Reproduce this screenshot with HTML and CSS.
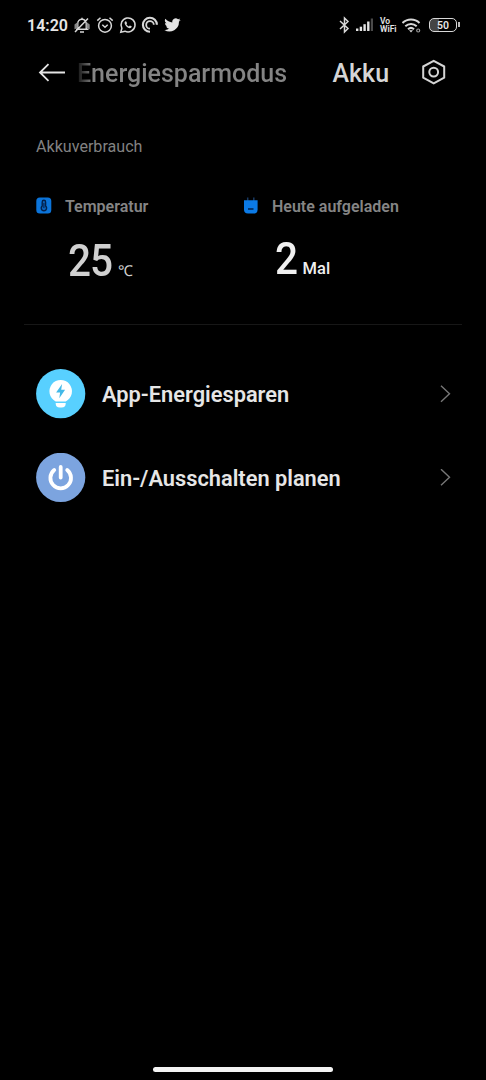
FILE: index.html
```html
<!DOCTYPE html>
<html lang="de">
<head>
<meta charset="utf-8">
<meta name="viewport" content="width=device-width, initial-scale=1">
<title>Akku</title>
<link rel="stylesheet" href="styles.css">
</head>
<body>
<div class="screen">
  <div class="statusbar">
    <span class="time">14:20</span>
    <div class="status-left">
      <svg width="18" height="18" viewBox="0 0 18 18" fill="none" stroke="#d8d8d8" stroke-width="1.500">
        <path d="M4.700 12.500V7.500a4.300 4.300 0 0 1 8.600 0v5M9 3.200V1.800M3 13.300h12.500M7 16h4M2 16L15 2.500"/>
        <path d="M1.500 8.500L4.700 6v6l-3.200 1.200zM16.700 8.500L13.500 6v6l3.200 1.200z" fill="#888" stroke="none"/>
      </svg>
      <svg width="18" height="18" viewBox="0 0 18 18" fill="none" stroke="#d8d8d8" stroke-width="1.500">
        <circle cx="9" cy="9.800" r="6.400"/>
        <path d="M6.300 8.800L9 11.300l2.700-2.500M1.300 4.600l3.200-2.800M16.700 4.600l-3.200-2.800"/>
      </svg>
      <svg width="18" height="18" viewBox="0 0 18 18">
        <path d="M1.800 16.300l1.100-4A7 7 0 1 1 5.900 15.200z" fill="none" stroke="#d8d8d8" stroke-width="1.500"/>
        <path d="M6.400 5.200c-1.200.8-1 2.500.3 4.200 1.500 2 3.500 3.200 5 2.600.9-.4 1.200-1.300.9-1.700l-1.700-.9-1.100 1c-1.100-.4-1.900-1.200-2.400-2.200l.7-1-.8-1.800z" fill="#d8d8d8"/>
      </svg>
      <svg width="18" height="18" viewBox="0 0 18 18" fill="none" stroke="#d8d8d8">
        <path d="M9 15.800A7 7 0 1 1 15.900 8.800" stroke-width="2.100"/>
        <path d="M9 12.700a3.800 3.800 0 1 1 3.800-3.900" stroke-width="1.800"/>
      </svg>
      <svg width="17" height="18" viewBox="0 0 24 24" fill="#e4e4e4">
        <path d="M23.500 4.800c-.9.400-1.800.6-2.700.7 1-.6 1.700-1.500 2-2.600-.9.500-1.900.9-3 1.100a4.700 4.700 0 0 0-8 4.300C7.900 8.100 4.400 6.200 2 3.300a4.700 4.700 0 0 0 1.500 6.300c-.8 0-1.500-.2-2.100-.6 0 2.300 1.600 4.200 3.800 4.700-.7.200-1.400.2-2.100.1.600 1.900 2.300 3.200 4.400 3.300A9.500 9.500 0 0 1 .5 19a13.400 13.400 0 0 0 20.600-11.900c.9-.6 1.700-1.400 2.400-2.300z"/>
      </svg>
    </div>
    <div class="status-right">
      <svg width="12" height="18" viewBox="0 0 12 18" fill="none" stroke="#d8d8d8" stroke-width="1.500">
        <path d="M2 5l8 7.500L6.500 16V2L10 5.500 2 13"/>
      </svg>
      <svg width="18" height="14" viewBox="0 0 18 14" fill="#e4e4e4">
        <rect x="0" y="10.500" width="2.400" height="2.500"/>
        <rect x="3.700" y="8.700" width="2.400" height="4.300"/>
        <rect x="7.400" y="6.200" width="2.400" height="6.800"/>
        <rect x="11.100" y="3.500" width="2.400" height="9.500"/>
        <rect x="14.800" y="0.500" width="2.200" height="12.500" fill="#4a4a4a"/>
      </svg>
      <div class="vowifi"><span>Vo</span><span>WiFi</span></div>
      <svg width="20" height="18" viewBox="0 0 20 18" fill="none" stroke="#d8d8d8" stroke-width="2">
        <path d="M0.500 7a12.200 12.200 0 0 1 17 0M3.300 10.200a8.300 8.300 0 0 1 11.400 0M6 13.200a4.500 4.500 0 0 1 6 0"/>
        <path d="M7 14.200L9 16.400l2-2.200z" fill="#d8d8d8" stroke="none"/>
        <circle cx="16.200" cy="14.500" r="1.500" stroke="#999" stroke-width="1.200"/>
      </svg>
      <div class="battery"><span>50</span></div>
    </div>
  </div>

  <div class="header">
    <svg class="back" width="28" height="20" viewBox="0 0 28 20" fill="none" stroke="#e4e4e4" stroke-width="1.800">
      <path d="M27 9.500H2M10.500 1.200L2 9.500l8.500 8.300"/>
    </svg>
    <div class="tabs">
      <span class="tab">Energiesparmodus</span>
      <span class="tab active">Akku</span>
    </div>
    <svg class="settings" width="26" height="28" viewBox="0 0 26 28" fill="none" stroke="#d4d4d4" stroke-width="2">
      <path d="M12.700 1.800L23.200 7.500v11.200L12.700 24.400 2.200 18.700V7.500z" stroke-linejoin="round"/>
      <circle cx="12.700" cy="13.100" r="4.400"/>
    </svg>
  </div>

  <div class="usage">
    <div class="section-title">Akkuverbrauch</div>
    <div class="stats">
      <div class="stat">
        <div class="stat-head">
          <svg width="16" height="18" viewBox="0 0 16 18">
            <rect x="0.300" y="0.500" width="15" height="16" rx="3.500" fill="#0b74da"/>
            <path d="M6.200 9V5a1.700 1.700 0 0 1 3.400 0v4a2.700 2.700 0 1 1-3.400 0z" fill="#0b60b8" stroke="#03204a" stroke-width="1.400"/>
            <path d="M7.900 6v5" stroke="#03204a" stroke-width="1"/>
          </svg>
          <span>Temperatur</span>
        </div>
        <div class="value temp"><b>25</b><span>℃</span></div>
      </div>
      <div class="stat">
        <div class="stat-head">
          <svg width="16" height="18" viewBox="0 0 16 18">
            <path d="M4.700 0.500v4M10.800 0.500v4" stroke="#173963" stroke-width="1.500"/>
            <path d="M1 3.300h13.600v9.200a4 4 0 0 1-4 4H5a4 4 0 0 1-4-4z" fill="#0b7ae6"/>
            <path d="M5 12h5.500" stroke="#03204a" stroke-width="1.500"/>
          </svg>
          <span>Heute aufgeladen</span>
        </div>
        <div class="value charge"><b>2</b><span>Mal</span></div>
      </div>
    </div>
  </div>

  <div class="list">
    <div class="item">
      <svg width="50" height="50" viewBox="0 0 50 50">
        <circle cx="24.700" cy="24.700" r="24.600" fill="#58d0ff"/>
        <path d="M19.700 32.400a11.300 11.300 0 1 1 10 0z" fill="#fff"/>
        <path d="M19.700 34h10v.6a4 4 0 0 1-4 4h-2a4 4 0 0 1-4-4z" fill="#fff"/>
        <path d="M26.100 15l-6 8.400h4l-.8 5.800 5.800-8.400h-3.900z" fill="#43b9e8"/>
      </svg>
      <span class="item-text">App-Energiesparen</span>
      <svg class="chevron" width="12" height="18" viewBox="0 0 12 18" fill="none" stroke="#777" stroke-width="1.400"><path d="M2 .7l8.500 8-8.500 8"/></svg>
    </div>
    <div class="item">
      <svg width="50" height="50" viewBox="0 0 50 50" fill="none" stroke="#fff" stroke-width="3.800" stroke-linecap="round">
        <circle cx="24.700" cy="24.400" r="24.600" fill="#7ca4df" stroke="none"/>
        <path d="M18.200 17a10.300 10.300 0 1 0 13 0M24.700 14v10.500"/>
      </svg>
      <span class="item-text">Ein-/Ausschalten planen</span>
      <svg class="chevron" width="12" height="18" viewBox="0 0 12 18" fill="none" stroke="#777" stroke-width="1.400"><path d="M2 .2l8.500 8-8.500 8"/></svg>
    </div>
  </div>

  <div class="homebar"></div>
</div>
</body>
</html>
```

FILE: styles.css
```css
* {
  box-sizing: border-box;
}

body {
  margin: 0;
  background-color: #000;
  color: #e6e6e6;
  font-family: Roboto, "Liberation Sans", sans-serif;
}

svg {
  display: block;
  flex-shrink: 0;
}

.screen {
  height: 1080px;
  display: flex;
  flex-direction: column;
  overflow: hidden;
}

.statusbar {
  height: 50px;
  padding: 0 27px;
  display: flex;
  align-items: center;
}

.time {
  width: 46px;
  font-size: 16px;
  font-weight: 600;
}

.status-left {
  display: flex;
  gap: 4.800px;
}

.status-right {
  margin-left: auto;
  display: flex;
  align-items: center;
}

.status-right svg:nth-child(2) {
  margin-left: 6px;
}

.vowifi {
  width: 18px;
  margin: 0 4px 0 6px;
  display: flex;
  flex-direction: column;
  font-size: 8.500px;
  line-height: 8px;
  font-weight: 600;
}

.battery {
  position: relative;
  width: 28px;
  height: 14px;
  margin-left: 7px;
  margin-right: 2px;
  border: 1.500px solid #d8d8d8;
  border-radius: 5px;
  font-size: 10.500px;
  font-weight: 600;
  line-height: 13px;
  text-align: center;
  background: linear-gradient(to right, #444 35%, #000 35%);
}

.battery:after {
  content: "";
  position: absolute;
  right: -4px;
  top: 3px;
  width: 2px;
  height: 5px;
  background-color: #bbb;
}

.header {
  height: 46px;
  padding: 0 39px 0 38px;
  display: flex;
  align-items: center;
}

.tabs {
  flex: 1;
  display: flex;
  margin-left: 11px;
  padding-top: 2px;
  font-size: 25px;
  font-weight: 500;
  line-height: 30px;
}

.tab {
  width: 255.500px;
  color: transparent;
  background: linear-gradient(to right, #111 0, #848484 16px);
  -webkit-background-clip: text;
  background-clip: text;
}

.tab.active {
  width: auto;
  color: #d6d6d6;
  background: none;
}

.usage {
  height: 229px;
  margin: 0 24px;
  padding: 41px 12px 0;
  border-bottom: 1px solid #171717;
}

.section-title {
  font-size: 16.100px;
  line-height: 20px;
  color: #828282;
}

.stats {
  display: flex;
  margin-top: 39px;
}

.stat {
  width: 207px;
}

.stat-head {
  display: flex;
  align-items: center;
  gap: 13px;
  height: 20px;
  font-size: 16px;
  font-weight: 600;
  color: #858585;
  white-space: nowrap;
}

.value {
  display: flex;
  align-items: baseline;
  margin-top: 17px;
  padding-left: 32px;
}

/* the big digits are slightly condensed */
.value b {
  font-size: 45px;
  line-height: 56px;
  font-weight: 500;
  letter-spacing: -1px;
  transform: scaleX(0.9);
  transform-origin: left;
}

.value span {
  font-size: 16px;
  font-weight: 500;
}

.temp {
  color: #d0d0d0;
}

.temp span {
  margin-left: 1px;
  font-size: 15px;
  font-weight: 400;
}

.charge {
  margin-top: 15px;
  color: #f0f0f0;
}

.charge span {
  margin-left: 3px;
  font-size: 16.500px;
}

.list {
  padding: 44px 35px 0 36px;
}

.item {
  display: flex;
  align-items: center;
  height: 50px;
  margin-bottom: 34px;
}

.item-text {
  flex: 1;
  margin-left: 16px;
  font-size: 21.800px;
  font-weight: 600;
}

.homebar {
  width: 180px;
  height: 5px;
  margin: auto auto 8px;
  border-radius: 3px;
  background-color: #f4f4f4;
}
```
